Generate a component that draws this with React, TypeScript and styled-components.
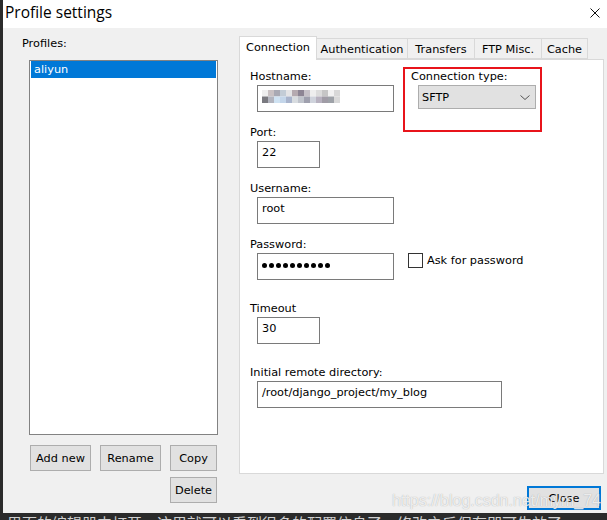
import React from 'react';
import styled, { createGlobalStyle } from 'styled-components';

const GlobalStyle = createGlobalStyle`
  html, body {
    margin: 0;
    padding: 0;
    background: #2b2b2b;
  }
  body {
    font-family: "DejaVu Sans", Verdana, sans-serif;
    color: #000;
  }
  * {
    box-sizing: border-box;
  }
`;

const tabs = [
  { label: 'Connection', width: 78 },
  { label: 'Authentication', width: 92 },
  { label: 'Transfers', width: 68 },
  { label: 'FTP Misc.', width: 68 },
  { label: 'Cache', width: 47 },
];

const mosaic = [
  ['#eeeeee', '#c9c1c3', '#a9a9b3', '#c3ccd6', '#e4e4e6', '#b5aab0', '#8d8594', '#c6c1c8', '#eeeeee', '#dcdcdc', '#c6c6c6', '#f2f2f2', '#d8d8d8'],
  ['#7a7a80', '#b2b4be', '#cfe2f2', '#c4d6ea', '#a9b4cc', '#d8dce0', '#c0c4cc', '#9fa0ae', '#cfd3dc', '#b8b2c0', '#a09ca6', '#9ea2a8', '#d9d9d9'],
];

export default function App() {
  return (
    <Screen>
      <GlobalStyle />
      <Window>
        <TitleBar>
          <Title>Profile settings</Title>
          <svg width="10" height="10" viewBox="0 0 10 10" style={{ marginTop: 8 }}>
            <path d="M0.5 0.5 L9.5 9.5 M9.5 0.5 L0.5 9.5" stroke="#111" strokeWidth="1" fill="none" />
          </svg>
        </TitleBar>

        <Body>
          <LeftColumn>
            <ProfilesLabel>Profiles:</ProfilesLabel>
            <ListBox>
              <ListItem $selected>aliyun</ListItem>
            </ListBox>
            <ButtonRow>
              <Button $width={61}>Add new</Button>
              <Button $width={61}>Rename</Button>
              <Button $width={47}>Copy</Button>
            </ButtonRow>
            <ButtonRow $end>
              <Button $width={47}>Delete</Button>
            </ButtonRow>
          </LeftColumn>

          <RightColumn>
            <TabRow>
              {tabs.map((t, i) => (
                <Tab key={t.label} $width={t.width} $active={i === 0}>
                  {t.label}
                </Tab>
              ))}
            </TabRow>
            <Panel>
              <TopRow>
                <Field>
                  <Label>Hostname:</Label>
                  <TextBox $width={137}>
                    {/* pixelated (censored) host name */}
                    <svg width="78" height="13" viewBox="0 0 78 13">
                      {mosaic.map((row, r) =>
                        row.map((c, i) => (
                          <rect key={`${r}-${i}`} x={i * 6} y={r * 6.5} width="6" height="6.5" fill={c} />
                        )),
                      )}
                    </svg>
                  </TextBox>
                </Field>
                <Highlight>
                  <Label>Connection type:</Label>
                  <Select>
                    <span>SFTP</span>
                    <svg width="10" height="5" viewBox="0 0 10 5">
                      <polyline points="0.5,0.5 5,4.5 9.5,0.5" fill="none" stroke="#555" strokeWidth="1" />
                    </svg>
                  </Select>
                </Highlight>
              </TopRow>

              <Field $top={14}>
                <Label>Port:</Label>
                <TextBox $width={63}>22</TextBox>
              </Field>

              <Field $top={14}>
                <Label>Username:</Label>
                <TextBox $width={137}>root</TextBox>
              </Field>

              <Field $top={14}>
                <Label>Password:</Label>
                <InlineRow>
                  <TextBox $width={137}>
                    <Dots>
                      {Array.from({ length: 10 }).map((_, i) => (
                        <Dot key={i} />
                      ))}
                    </Dots>
                  </TextBox>
                  <CheckLabel>
                    <CheckBox />
                    Ask for password
                  </CheckLabel>
                </InlineRow>
              </Field>

              <Field $top={22}>
                <Label>Timeout</Label>
                <TextBox $width={63}>30</TextBox>
              </Field>

              <Field $top={22}>
                <Label>Initial remote directory:</Label>
                <TextBox $width={245}>/root/django_project/my_blog</TextBox>
              </Field>
            </Panel>
            <FooterRow>
              <CloseButton>Close</CloseButton>
            </FooterRow>
          </RightColumn>
        </Body>
      </Window>
      <TaskStrip>里面的编辑器中打开，这里就可以看到很多的配置信息了，修改之后保存即可生效了</TaskStrip>
      <Watermark>https://blog.csdn.net/mym_74</Watermark>
    </Screen>
  );
}

const Screen = styled.div`
  position: relative;
  width: 607px;
  height: 520px;
  overflow: hidden;
  background: #2b2b2b;
  padding-left: 3px;
  display: flex;
  flex-direction: column;
`;

const Window = styled.div`
  width: 604px;
  height: 513px;
  flex-shrink: 0;
  background: #f0f0f0;
  display: flex;
  flex-direction: column;
  overflow: hidden;
`;

const TitleBar = styled.div`
  height: 28px;
  flex-shrink: 0;
  background: #ffffff;
  display: flex;
  align-items: flex-start;
  justify-content: space-between;
  padding: 0 7px 0 2px;
`;

const Title = styled.span`
  font-family: "Open Sans", "Noto Sans", sans-serif;
  font-size: 15.5px;
  line-height: 24px;
  color: #000;
`;

const Body = styled.div`
  flex: 1;
  display: flex;
  gap: 21px;
  padding: 8px 3px 0 19px;
`;

const LeftColumn = styled.div`
  width: 196px;
  display: flex;
  flex-direction: column;
`;

const ProfilesLabel = styled.div`
  font-size: 11.3px;
  line-height: 14px;
  margin-top: 1px;
`;

const ListBox = styled.div`
  width: 189px;
  height: 375px;
  margin: 9px 0 0 7px;
  background: #ffffff;
  border: 1px solid #828282;
  padding: 0 1px;
`;

const ListItem = styled.div<{ $selected?: boolean }>`
  height: 17px;
  line-height: 17px;
  padding-left: 3px;
  font-size: 11.3px;
  background: ${(p) => (p.$selected ? '#0078d7' : 'transparent')};
  color: ${(p) => (p.$selected ? '#ffffff' : '#000')};
`;

const ButtonRow = styled.div<{ $end?: boolean }>`
  display: flex;
  gap: 9px;
  justify-content: ${(p) => (p.$end ? 'flex-end' : 'flex-start')};
  margin-top: ${(p) => (p.$end ? '6px' : '10px')};
  padding: ${(p) => (p.$end ? '0 1px 0 0' : '0 0 0 8px')};
`;

const Button = styled.div<{ $width: number }>`
  width: ${(p) => p.$width}px;
  height: 26px;
  background: #e1e1e1;
  border: 1px solid #adadad;
  font-size: 11.3px;
  display: flex;
  align-items: center;
  justify-content: center;
`;

const RightColumn = styled.div`
  flex: 1;
  display: flex;
  flex-direction: column;
`;

const TabRow = styled.div`
  height: 23px;
  display: flex;
  align-items: flex-end;
  position: relative;
  z-index: 1;
`;

const Tab = styled.div<{ $width: number; $active?: boolean }>`
  width: ${(p) => p.$width}px;
  height: ${(p) => (p.$active ? 24 : 21)}px;
  margin-bottom: ${(p) => (p.$active ? -1 : 0)}px;
  margin-left: ${(p) => (p.$active ? 0 : -1)}px;
  background: ${(p) => (p.$active ? '#ffffff' : '#f0f0f0')};
  border: 1px solid #d9d9d9;
  border-bottom: ${(p) => (p.$active ? 'none' : '1px solid #d9d9d9')};
  font-size: 11.3px;
  line-height: 14px;
  padding-top: 4px;
  text-align: center;
  white-space: nowrap;
  position: relative;
  z-index: ${(p) => (p.$active ? 2 : 1)};
`;

const Panel = styled.div`
  height: 415px;
  background: #ffffff;
  border: 1px solid #d9d9d9;
  padding: 10px 0 0 10px;
  display: flex;
  flex-direction: column;
`;

const TopRow = styled.div`
  display: flex;
  align-items: flex-start;
`;

const Field = styled.div<{ $top?: number }>`
  display: flex;
  flex-direction: column;
  margin-top: ${(p) => p.$top ?? 0}px;
`;

const Label = styled.div`
  font-size: 11.3px;
  line-height: 14px;
  margin-bottom: 1px;
  white-space: nowrap;
`;

const TextBox = styled.div<{ $width: number }>`
  width: ${(p) => p.$width}px;
  height: 27px;
  margin-left: 7px;
  background: #ffffff;
  border: 1px solid #7a7a7a;
  padding: 4px 0 0 4px;
  font-size: 11.3px;
  line-height: 14px;
  white-space: nowrap;
  overflow: hidden;
`;

const Highlight = styled.div`
  width: 139px;
  height: 65px;
  margin: -3px 0 -20px 9px;
  border: 2px solid #e8141b;
  padding: 1px 0 0 6px;
  display: flex;
  flex-direction: column;
`;

const Select = styled.div`
  width: 118px;
  height: 24px;
  margin-left: 7px;
  background: #e1e1e1;
  border: 1px solid #adadad;
  display: flex;
  align-items: center;
  justify-content: space-between;
  padding: 0 5px 0 3px;
  font-size: 11.3px;
`;

const InlineRow = styled.div`
  display: flex;
  align-items: flex-start;
`;

const Dots = styled.div`
  height: 14px;
  display: flex;
  align-items: center;
  gap: 2px;
`;

const Dot = styled.span`
  width: 5px;
  height: 5px;
  border-radius: 50%;
  background: #000;
`;

const CheckLabel = styled.div`
  display: flex;
  align-items: center;
  gap: 4px;
  margin: 0 0 0 14px;
  font-size: 11.3px;
  line-height: 14px;
  white-space: nowrap;
`;

const CheckBox = styled.span`
  width: 15px;
  height: 15px;
  background: #ffffff;
  border: 1px solid #333333;
`;

const FooterRow = styled.div`
  display: flex;
  justify-content: flex-end;
  margin-top: 12px;
  padding-right: 3px;
`;

const CloseButton = styled.div`
  width: 74px;
  height: 24px;
  background: #e1e1e1;
  border: 2px solid #0078d7;
  font-size: 11.3px;
  display: flex;
  align-items: center;
  justify-content: center;
`;

const TaskStrip = styled.div`
  height: 7px;
  flex-shrink: 0;
  overflow: hidden;
  color: #d0d0d0;
  font-family: "Noto Sans CJK SC", sans-serif;
  font-size: 15px;
  line-height: 20px;
  white-space: nowrap;
  padding-left: 4px;
`;

const Watermark = styled.div`
  position: absolute;
  left: 392px;
  top: 492px;
  font-family: "Liberation Sans", Arial, sans-serif;
  font-size: 16px;
  line-height: 18px;
  color: rgba(255, 255, 255, 0.8);
  text-shadow: 0 0 1px rgba(110, 110, 110, 0.6);
  white-space: nowrap;
  pointer-events: none;
`;
